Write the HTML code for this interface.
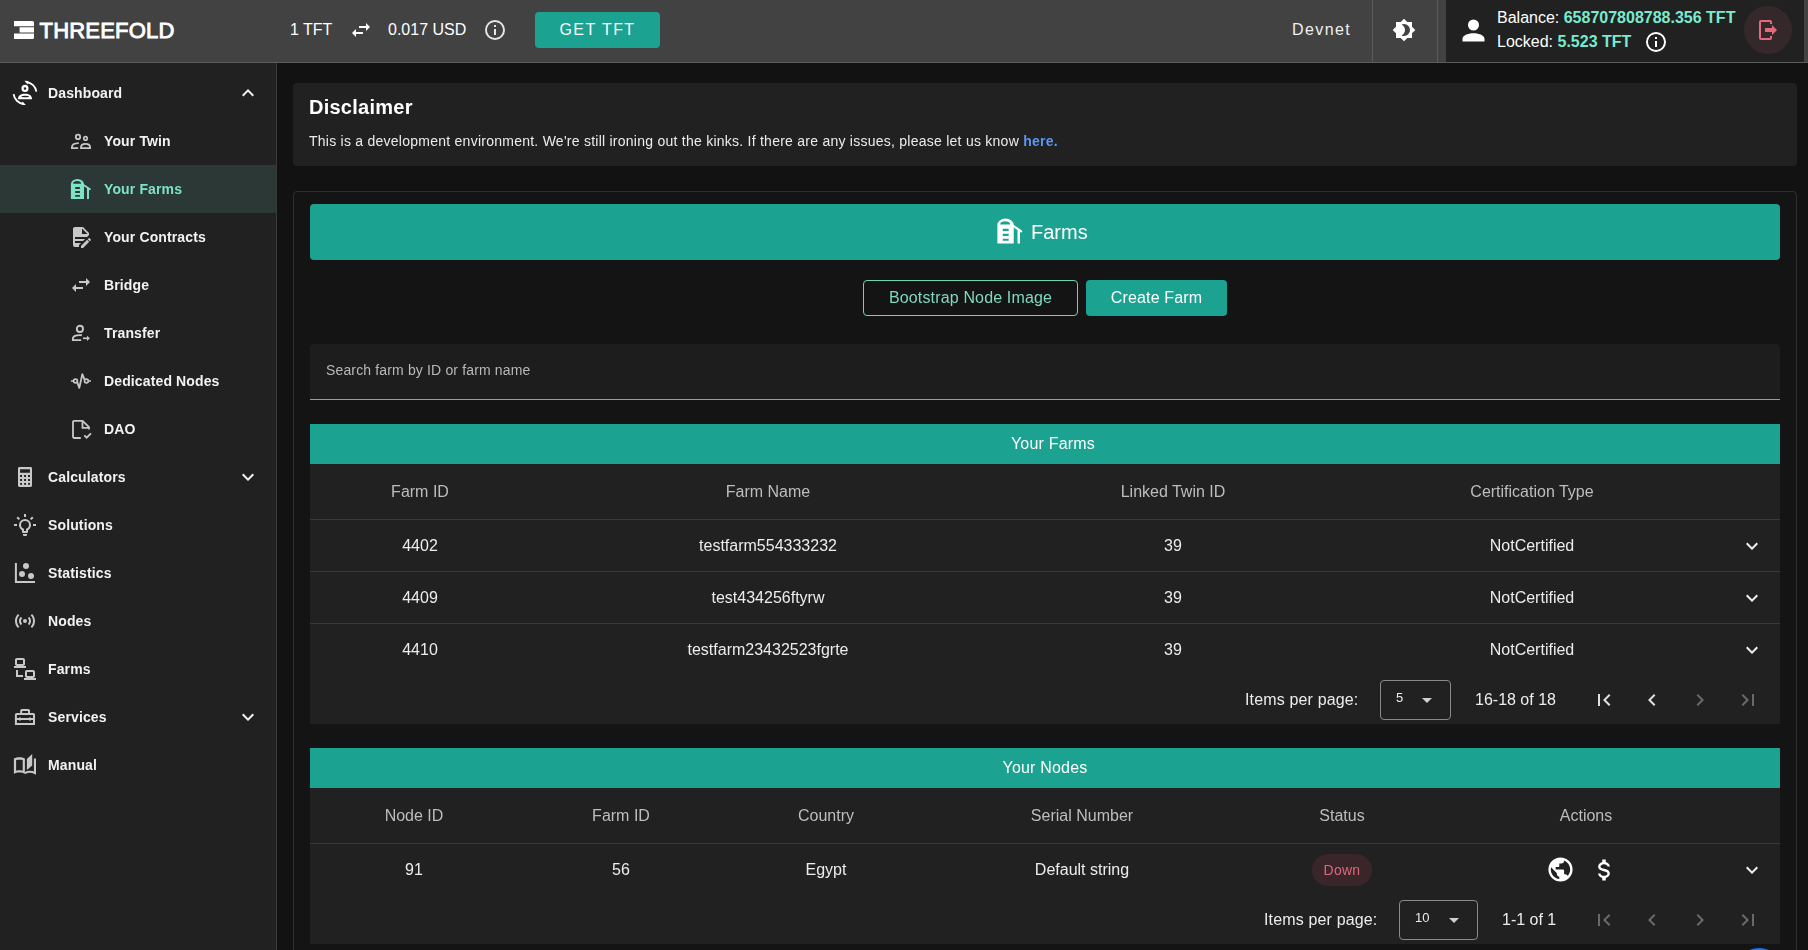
<!DOCTYPE html>
<html><head><meta charset="utf-8">
<style>
*{box-sizing:border-box;margin:0;padding:0}
html,body{width:1808px;height:950px;overflow:hidden;background:#121212;font-family:"Liberation Sans",sans-serif;color:#fff}
.abs{position:absolute}
svg{display:block}
#hdr{position:absolute;left:0;top:0;width:1808px;height:63px;background:#424242;border-bottom:1px solid #5c5c5c}
#side{position:absolute;left:0;top:63px;width:277px;height:887px;background:#212121;border-right:1px solid #3a3a3a}
.ni{position:absolute;left:0;width:276px;height:48px}
.ni .t{position:absolute;top:0;line-height:48px;font-size:14px;font-weight:bold;color:#ececec}
.ni svg{position:absolute}
.ctr{position:absolute;transform:translateX(-50%);white-space:nowrap}
.teal{background:#1ba291}
.th{font-size:16px;color:#bdbdbd}
.td{font-size:16px;color:#ececec}
.hr{position:absolute;height:1px;background:#3d3d3d}
#side,#main{will-change:transform}#main{position:absolute;left:0;top:0;width:1808px;height:950px}</style></head><body>

<!-- HEADER -->
<div id="hdr">
  <!-- logo -->
  <svg class="abs" style="left:14px;top:21px" width="20" height="18" viewBox="0 0 20 18">
    <path fill="#fff" d="M0,0H18.5A1.5,1.5 0 0 1 20,1.5V5.2H0Z M5.6,6.2H20V11.6H5.6Z M0,12.6H20V16.5A1.5,1.5 0 0 1 18.5,18H0Z"/>
  </svg>
  <div class="abs" style="left:39.5px;top:16.5px;font-size:22px;font-weight:normal;-webkit-text-stroke:0.9px #fff;letter-spacing:0.2px;color:#fff;line-height:27px">THREEFOLD</div>
  <div class="abs" style="left:290px;top:20px;font-size:16px;line-height:19px;color:#fff">1 TFT</div>
  <svg class="abs" style="left:349px;top:18px" width="24" height="24" viewBox="0 0 24 24"><path fill="#fff" d="M21,9L17,5V8H10V10H17V13M7,11L3,15L7,19V16H14V14H7V11Z"/></svg>
  <div class="abs" style="left:388px;top:20px;font-size:16px;line-height:19px;color:#fff">0.017 USD</div>
  <svg class="abs" style="left:483px;top:18px" width="24" height="24" viewBox="0 0 24 24"><path fill="#e6e6e6" d="M11,9H13V7H11M12,20C7.59,20 4,16.41 4,12C4,7.59 7.59,4 12,4C16.41,4 20,7.59 20,12C20,16.41 16.41,20 12,20M12,2A10,10 0 0,0 2,12A10,10 0 0,0 12,22A10,10 0 0,0 22,12A10,10 0 0,0 12,2M11,17H13V11H11V17Z"/></svg>
  <div class="abs teal" style="left:535px;top:12px;width:125px;height:36px;border-radius:4px;background:#1ba291;font-size:16px;letter-spacing:1.43px;line-height:36px;text-align:center;color:#fff">GET TFT</div>

  <div class="abs" style="left:1292px;top:20px;font-size:16px;letter-spacing:1.4px;line-height:19px;color:#f0f0f0">Devnet</div>
  <div class="abs" style="left:1372px;top:0;width:1px;height:62px;background:#5a5a5a"></div>
  <svg class="abs" style="left:1392px;top:18px" width="24" height="24" viewBox="0 0 24 24"><path fill="#fff" d="M12,18C11.11,18 10.26,17.8 9.5,17.45C11.56,16.5 13,14.42 13,12C13,9.58 11.56,7.5 9.5,6.55C10.26,6.2 11.11,6 12,6A6,6 0 0,1 18,12A6,6 0 0,1 12,18M20,8.69V4H15.31L12,0.69L8.69,4H4V8.69L0.69,12L4,15.31V20H8.69L12,23.31L15.31,20H20V15.31L23.31,12L20,8.69Z"/></svg>
  <div class="abs" style="left:1437px;top:0;width:1px;height:62px;background:#5a5a5a"></div>
  <div class="abs" style="left:1446px;top:0;width:358px;height:62px;background:#212121"></div>
  <svg class="abs" style="left:1456.5px;top:13.5px" width="33" height="33" viewBox="0 0 24 24"><path fill="#fff" d="M12,4A4,4 0 0,1 16,8A4,4 0 0,1 12,12A4,4 0 0,1 8,8A4,4 0 0,1 12,4M12,14C16.42,14 20,15.79 20,18V20H4V18C4,15.79 7.58,14 12,14Z"/></svg>
  <div class="abs" style="left:1497px;top:8px;font-size:16px;line-height:19px;color:#fff;white-space:nowrap">Balance: <b style="color:#78ebce">658707808788.356 TFT</b></div>
  <div class="abs" style="left:1497px;top:32px;font-size:16px;line-height:19px;color:#fff;white-space:nowrap">Locked: <b style="color:#78ebce">5.523 TFT</b></div>
  <svg class="abs" style="left:1644px;top:30px" width="24" height="24" viewBox="0 0 24 24"><path fill="#fff" d="M11,9H13V7H11M12,20C7.59,20 4,16.41 4,12C4,7.59 7.59,4 12,4C16.41,4 20,7.59 20,12C20,16.41 16.41,20 12,20M12,2A10,10 0 0,0 2,12A10,10 0 0,0 12,22A10,10 0 0,0 22,12A10,10 0 0,0 12,2M11,17H13V11H11V17Z"/></svg>
  <div class="abs" style="left:1744px;top:6px;width:48px;height:48px;border-radius:50%;background:#35282a"></div>
  <svg class="abs" style="left:1756px;top:18px" width="24" height="24" viewBox="0 0 24 24"><path fill="#e2697e" d="M16,17V14H9V10H16V7L21,12L16,17M14,2A2,2 0 0,1 16,4V6H14V4H5V20H14V18H16V20A2,2 0 0,1 14,22H5A2,2 0 0,1 3,20V4A2,2 0 0,1 5,2H14Z"/></svg>
</div>

<!-- SIDEBAR -->
<div id="side">
  <!-- Dashboard -->
  <svg class="abs" style="left:12px;top:17px" width="26" height="26" viewBox="0 0 26 26" fill="none" stroke="#fff">
    <circle cx="13" cy="8.4" r="2.4" stroke-width="2.3"/>
    <path d="M5.9,19.2 C5.9,15.6 9,13.8 13,13.8 C17,13.8 20.1,15.6 20.1,19.2 Z M9.3,16.45 A3.9,0.8 0 0 1 17.1,16.45 A3.9,0.8 0 0 1 9.3,16.45Z" fill="#fff" stroke="none" fill-rule="evenodd"/>
    <path d="M14.5,2.1 A11.2,11.2 0 0 1 24.4,11.6" stroke-width="1.8"/>
    <path d="M12.4,0.8 L16.6,0.9 L15.6,4.6 Z" fill="#fff" stroke="none"/>
    <path d="M1.6,14.2 A11.2,11.2 0 0 0 11.5,23.9" stroke-width="1.8"/>
    <path d="M13.8,25 L9.6,25.1 L10.6,21.4 Z" fill="#fff" stroke="none"/>
  </svg>
  <div class="abs" style="left:48px;top:6px;height:48px;line-height:48px;font-size:14px;font-weight:bold;letter-spacing:0.13px;color:#f2f2f2">Dashboard</div>
  <svg class="abs" style="left:236px;top:18px" width="24" height="24" viewBox="0 0 24 24"><path fill="#f2f2f2" d="M7.41,15.41L12,10.83L16.59,15.41L18,14L12,8L6,14L7.41,15.41Z"/></svg>

  <!-- Your Twin -->
  <svg class="abs" style="left:69px;top:66px" width="24" height="24" viewBox="0 0 24 24" fill="none" stroke="#c8c8c8" stroke-width="1.8">
    <circle cx="9" cy="7.9" r="2.2"/>
    <circle cx="16.5" cy="9.4" r="1.75" stroke-width="1.6"/>
    <path d="M9.8,14.1 C5.2,14.2 2.9,16 2.9,18.2 V19.1 H9.2"/>
    <path d="M12,19.1 V18.3 C12,16 14,14.9 16.5,14.9 C19,14.9 21.1,16 21.1,18.3 V19.1 Z"/>
  </svg>
  <div class="abs" style="left:104px;top:54px;height:48px;line-height:48px;font-size:14px;font-weight:bold;letter-spacing:0.13px;color:#f2f2f2">Your Twin</div>

  <!-- Your Farms (active) -->
  <div class="abs" style="left:0;top:102px;width:276px;height:48px;background:#2c3836"></div>
  <svg class="abs" style="left:69px;top:114px" width="24" height="24" viewBox="0 0 24 24">
    <path fill="#7de3c6" fill-rule="evenodd" d="M1.9,22 V7.2 A6.55,5.2 0 0 1 15,7.2 V22 Z M4.1,6.7 A4,2.6 0 0 1 12.1,6.7 Z M6.2,10.1 H10.9 V11.9 H6.2 Z M6.2,14.1 H10.9 V15.9 H6.2 Z M6.2,18.1 H10.9 V19.8 H6.2 Z"/>
    <path d="M15,8.2 L21,12.3" stroke="#7de3c6" stroke-width="1.7" stroke-linecap="round" fill="none"/>
    <path d="M19,10.9 V22" stroke="#7de3c6" stroke-width="2" fill="none"/>
  </svg>
  <div class="abs" style="left:104px;top:102px;height:48px;line-height:48px;font-size:14px;font-weight:bold;letter-spacing:0.13px;color:#7de3c6">Your Farms</div>

  <!-- Your Contracts -->
  <svg class="abs" style="left:69px;top:162px" width="24" height="24" viewBox="0 0 24 24"><path fill="#c8c8c8" d="M6,2C4.89,2 4,2.89 4,4V20A2,2 0 0,0 6,22H10V20.09L12.09,18H6V16H14.09L16.09,14H6V12H18.09L20,10.09V8L14,2H6M13,3.5L18.5,9H13V3.5M20.15,13C20,13 19.86,13.05 19.75,13.16L18.73,14.18L20.82,16.26L21.84,15.25C22.05,15.03 22.05,14.67 21.84,14.46L20.54,13.16C20.43,13.05 20.29,13 20.15,13M18.14,14.77L12,20.92V23H14.08L20.23,16.85L18.14,14.77Z"/></svg>
  <div class="abs" style="left:104px;top:150px;height:48px;line-height:48px;font-size:14px;font-weight:bold;letter-spacing:0.13px;color:#f2f2f2">Your Contracts</div>

  <!-- Bridge -->
  <svg class="abs" style="left:69px;top:210px" width="24" height="24" viewBox="0 0 24 24"><path fill="#c8c8c8" d="M21,9L17,5V8H10V10H17V13M7,11L3,15L7,19V16H14V14H7V11Z"/></svg>
  <div class="abs" style="left:104px;top:198px;height:48px;line-height:48px;font-size:14px;font-weight:bold;letter-spacing:0.13px;color:#f2f2f2">Bridge</div>

  <!-- Transfer -->
  <svg class="abs" style="left:69px;top:258px" width="24" height="24" viewBox="0 0 24 24" fill="none" stroke="#c8c8c8" stroke-width="1.9">
    <circle cx="10.9" cy="7.9" r="3.1"/>
    <path d="M12.9,14.2 C12.3,14.1 11.6,14.1 11,14.1 C6.5,14.1 3.9,15.8 3.9,17.6 V19.1 H12.2"/>
    <path d="M14,17.3 H18.5" stroke-width="1.7"/>
    <path d="M18,14.7 L20.9,17.3 L18,19.9 Z" fill="#c8c8c8" stroke="none"/>
  </svg>
  <div class="abs" style="left:104px;top:246px;height:48px;line-height:48px;font-size:14px;font-weight:bold;letter-spacing:0.13px;color:#f2f2f2">Transfer</div>

  <!-- Dedicated Nodes -->
  <svg class="abs" style="left:69px;top:306px" width="24" height="24" viewBox="0 0 24 24" fill="none" stroke="#c8c8c8" stroke-width="1.7">
    <path d="M1.9,12 H4.3 M19.6,12 H22"/>
    <circle cx="6.5" cy="12" r="1.9"/>
    <circle cx="17.4" cy="12" r="1.9"/>
    <path d="M8.2,13.1 L10.3,18.9 L13.3,5.2 L15.6,10.6" stroke-width="1.8" stroke-linejoin="round"/>
  </svg>
  <div class="abs" style="left:104px;top:294px;height:48px;line-height:48px;font-size:14px;font-weight:bold;letter-spacing:0.13px;color:#f2f2f2">Dedicated Nodes</div>

  <!-- DAO -->
  <svg class="abs" style="left:69px;top:354px" width="24" height="24" viewBox="0 0 24 24" fill="none" stroke="#c8c8c8" stroke-width="1.8">
    <path d="M11.8,21 H5.2 A1.2,1.2 0 0 1 4,19.8 V5 A1.2,1.2 0 0 1 5.2,3.8 H13.6 L20,10.2 V12.6"/>
    <path d="M13.5,3.9 V10.9 H20"/>
    <path d="M15.3,18.4 L17.6,20.7 L22,16.3"/>
  </svg>
  <div class="abs" style="left:104px;top:342px;height:48px;line-height:48px;font-size:14px;font-weight:bold;letter-spacing:0.13px;color:#f2f2f2">DAO</div>

  <!-- Calculators -->
  <svg class="abs" style="left:12px;top:402px" width="24" height="24" viewBox="0 0 24 24">
    <path fill="#c8c8c8" fill-rule="evenodd" d="M7.4,2H18.6A1.4,1.4 0 0 1 20,3.4V20.6A1.4,1.4 0 0 1 18.6,22H7.4A1.4,1.4 0 0 1 6,20.6V3.4A1.4,1.4 0 0 1 7.4,2Z M8.1,4.2H17.9V7.8H8.1Z M8.1,10.1H10V11.9H8.1Z M12.1,10.1H14V11.9H12.1Z M16.1,10.1H18V11.9H16.1Z M8.1,14.1H10V15.9H8.1Z M12.1,14.1H14V15.9H12.1Z M16.1,14.1H18V15.9H16.1Z M8.1,18H10V19.8H8.1Z M12.1,18H14V19.8H12.1Z M16.1,18H18V19.8H16.1Z M8.1,9.6 H17.9 V9.6Z"/>
    <path d="M8,9 V20 M18,9 V20" stroke="none"/>
  </svg>
  <div class="abs" style="left:48px;top:390px;height:48px;line-height:48px;font-size:14px;font-weight:bold;letter-spacing:0.13px;color:#f2f2f2">Calculators</div>
  <svg class="abs" style="left:236px;top:402px" width="24" height="24" viewBox="0 0 24 24"><path fill="#f2f2f2" d="M7.41,8.58L12,13.17L16.59,8.58L18,10L12,16L6,10L7.41,8.58Z"/></svg>

  <!-- Solutions -->
  <svg class="abs" style="left:13px;top:450px" width="24" height="24" viewBox="0 0 24 24"><path fill="#c8c8c8" d="M20,11H23V13H20V11M1,11H4V13H1V11M13,1V4H11V1H13M4.92,3.5L7.05,5.64L5.63,7.05L3.5,4.93L4.92,3.5M16.95,5.63L19.07,3.5L20.5,4.93L18.36,7.05L16.95,5.63M12,6A6,6 0 0,1 18,12C18,14.22 16.79,16.16 15,17.2V19A1,1 0 0,1 14,20H10A1,1 0 0,1 9,19V17.2C7.21,16.16 6,14.22 6,12A6,6 0 0,1 12,6M14,21V22A1,1 0 0,1 13,23H11A1,1 0 0,1 10,22V21H14M11,18H13V15.87C14.73,15.43 16,13.86 16,12A4,4 0 0,0 12,8A4,4 0 0,0 8,12C8,13.86 9.27,15.43 11,15.87V18Z"/></svg>
  <div class="abs" style="left:48px;top:438px;height:48px;line-height:48px;font-size:14px;font-weight:bold;letter-spacing:0.13px;color:#f2f2f2">Solutions</div>

  <!-- Statistics -->
  <svg class="abs" style="left:12px;top:498px" width="24" height="24" viewBox="0 0 24 24">
    <path d="M3.9,2 V21 H23" fill="none" stroke="#c8c8c8" stroke-width="2"/>
    <circle cx="14" cy="5" r="3" fill="#c8c8c8"/><circle cx="10" cy="12.9" r="3" fill="#c8c8c8"/><circle cx="19" cy="15" r="3" fill="#c8c8c8"/>
  </svg>
  <div class="abs" style="left:48px;top:486px;height:48px;line-height:48px;font-size:14px;font-weight:bold;letter-spacing:0.13px;color:#f2f2f2">Statistics</div>

  <!-- Nodes -->
  <svg class="abs" style="left:13px;top:546px" width="24" height="24" viewBox="0 0 24 24"><path fill="#c8c8c8" d="M4.93,4.93C3.12,6.74 2,9.24 2,12C2,14.76 3.12,17.26 4.93,19.07L6.34,17.66C4.89,16.22 4,14.22 4,12C4,9.79 4.89,7.78 6.34,6.34L4.93,4.93M19.07,4.93L17.66,6.34C19.11,7.78 20,9.79 20,12C20,14.22 19.11,16.22 17.66,17.66L19.07,19.07C20.88,17.26 22,14.76 22,12C22,9.24 20.88,6.74 19.07,4.93M7.76,7.76C6.67,8.85 6,10.35 6,12C6,13.65 6.67,15.15 7.76,16.24L9.17,14.83C8.45,14.11 8,13.11 8,12C8,10.89 8.45,9.89 9.17,9.17L7.76,7.76M16.24,7.76L14.83,9.17C15.55,9.89 16,10.89 16,12C16,13.11 15.55,14.11 14.83,14.83L16.24,16.24C17.33,15.15 18,13.65 18,12C18,10.35 17.33,8.85 16.24,7.76M12,10A2,2 0 0,0 10,12A2,2 0 0,0 12,14A2,2 0 0,0 14,12A2,2 0 0,0 12,10Z"/></svg>
  <div class="abs" style="left:48px;top:534px;height:48px;line-height:48px;font-size:14px;font-weight:bold;letter-spacing:0.13px;color:#f2f2f2">Nodes</div>

  <!-- Farms -->
  <svg class="abs" style="left:13px;top:594px" width="24" height="24" viewBox="0 0 24 24"><path fill="#c8c8c8" d="M4,1C2.89,1 2,1.89 2,3V7C2,8.11 2.89,9 4,9H1V11H13V9H10C11.11,9 12,8.11 12,7V3C12,1.89 11.11,1 10,1H4M4,3H10V7H4V3M3,13V18L3,20H10V18H5V13H3M14,13C12.89,13 12,13.89 12,15V19C12,20.11 12.89,21 14,21H11V23H23V21H20C21.11,21 22,20.11 22,19V15C22,13.89 21.11,13 20,13H14M14,15H20V19H14V15Z"/></svg>
  <div class="abs" style="left:48px;top:582px;height:48px;line-height:48px;font-size:14px;font-weight:bold;letter-spacing:0.13px;color:#f2f2f2">Farms</div>

  <!-- Services -->
  <svg class="abs" style="left:12px;top:642px" width="24" height="24" viewBox="0 0 24 24" fill="none" stroke="#c8c8c8" stroke-width="2">
    <path d="M3.9,19 V9.8 A0.8,0.8 0 0 1 4.7,9 H21.2 A0.8,0.8 0 0 1 22,9.8 V19 Z"/>
    <path d="M9.2,9 V5.8 A0.8,0.8 0 0 1 10,5 H16.2 A0.8,0.8 0 0 1 17,5.8 V9"/>
    <path d="M4,14 H22"/>
    <path d="M8,12.6 V15.6 M18,12.6 V15.6" stroke-width="1.9"/>
  </svg>
  <div class="abs" style="left:48px;top:630px;height:48px;line-height:48px;font-size:14px;font-weight:bold;letter-spacing:0.13px;color:#f2f2f2">Services</div>
  <svg class="abs" style="left:236px;top:642px" width="24" height="24" viewBox="0 0 24 24"><path fill="#f2f2f2" d="M7.41,8.58L12,13.17L16.59,8.58L18,10L12,16L6,10L7.41,8.58Z"/></svg>

  <!-- Manual -->
  <svg class="abs" style="left:12px;top:690px" width="24" height="24" viewBox="0 0 24 24">
    <path fill="#c8c8c8" fill-rule="evenodd" d="M1.9,5.6 C4.9,3.8 9.9,3.8 12.9,5.6 V20.9 C9.9,19.1 4.9,19.1 1.9,20.9 Z M4.1,7.1 C6,6.5 8.8,6.5 10.7,7.1 V17.8 C8.8,17.2 6,17.2 4.1,17.8 Z"/>
    <path fill="#c8c8c8" d="M14.9,6.1 L20.2,1.1 V12.6 L14.9,17 Z"/>
    <path d="M12.9,20.1 C16,18.5 19.8,18.5 22.95,20.1 V5.4" fill="none" stroke="#c8c8c8" stroke-width="2.1"/>
  </svg>
  <div class="abs" style="left:48px;top:678px;height:48px;line-height:48px;font-size:14px;font-weight:bold;letter-spacing:0.13px;color:#f2f2f2">Manual</div>
</div>

<!-- MAIN -->
<div id="main">
<div class="abs" style="left:293px;top:83px;width:1504px;height:83px;background:#212121;border-radius:4px"></div>
<div class="abs" style="left:309px;top:96px;font-size:20px;font-weight:bold;line-height:23px;letter-spacing:0.25px;color:#fff">Disclaimer</div>
<div class="abs" style="left:309px;top:133px;font-size:14px;line-height:17px;letter-spacing:0.25px;color:#ececec;white-space:nowrap">This is a development environment. We're still ironing out the kinks. If there are any issues, please let us know <b style="color:#5c95f5">here.</b></div>
<div class="abs" style="left:293px;top:191px;width:1504px;height:800px;background:#141414;border:1px solid #2f2f2f;border-radius:4px"></div>
<div class="abs" style="left:310px;top:204px;width:1470px;height:56px;background:#1ba291;border-radius:4px"></div>
<svg class="abs" style="left:995px;top:216px" width="30" height="30" viewBox="0 0 24 24">
    <path fill="#fff" fill-rule="evenodd" d="M1.9,22 V7.2 A6.55,5.2 0 0 1 15,7.2 V22 Z M4.1,6.7 A4,2.6 0 0 1 12.1,6.7 Z M6.2,10.1 H10.9 V11.9 H6.2 Z M6.2,14.1 H10.9 V15.9 H6.2 Z M6.2,18.1 H10.9 V19.8 H6.2 Z"/>
    <path d="M15,8.2 L21,12.3" stroke="#fff" stroke-width="1.7" stroke-linecap="round" fill="none"/>
    <path d="M19,10.9 V22" stroke="#fff" stroke-width="2" fill="none"/>
  </svg>
<div class="abs" style="left:1031px;top:221px;font-size:20px;line-height:23px;color:#fff">Farms</div>
<div class="abs" style="left:863px;top:280px;width:215px;height:36px;border:1px solid #6fd3b7;border-radius:4px;color:#7ed9bf;font-size:16px;line-height:34px;letter-spacing:0.15px;text-align:center">Bootstrap Node Image</div>
<div class="abs" style="left:1086px;top:280px;width:141px;height:36px;background:#1ba291;border-radius:4px;color:#fff;font-size:16px;line-height:36px;letter-spacing:0.15px;text-align:center">Create Farm</div>
<div class="abs" style="left:310px;top:344px;width:1470px;height:56px;background:#1d1d1d;border-radius:4px 4px 0 0;border-bottom:1px solid #9a9a9a"></div>
<div class="abs" style="left:326px;top:362px;font-size:14px;line-height:17px;letter-spacing:0.15px;color:#b8b8b8">Search farm by ID or farm name</div>
<div class="abs" style="left:310px;top:424px;width:1470px;height:40px;background:#1ba291"></div>
<div class="ctr" style="left:1053px;top:435px;font-size:16px;line-height:18px;letter-spacing:0.2px;color:#fff">Your Farms</div>
<div class="abs" style="left:310px;top:464px;width:1470px;height:260px;background:#212121"></div>
<div class="ctr th" style="left:420px;top:483px;line-height:18px">Farm ID</div>
<div class="ctr th" style="left:768px;top:483px;line-height:18px">Farm Name</div>
<div class="ctr th" style="left:1173px;top:483px;line-height:18px">Linked Twin ID</div>
<div class="ctr th" style="left:1532px;top:483px;line-height:18px">Certification Type</div>
<div class="hr" style="left:310px;top:519px;width:1470px;background:#3a3a3a"></div>
<div class="ctr td" style="left:420px;top:536.5px;line-height:18px">4402</div>
<div class="ctr td" style="left:768px;top:536.5px;line-height:18px">testfarm554333232</div>
<div class="ctr td" style="left:1173px;top:536.5px;line-height:18px">39</div>
<div class="ctr td" style="left:1532px;top:536.5px;line-height:18px">NotCertified</div>
<svg class="abs" style="left:1740px;top:534px" width="24" height="24" viewBox="0 0 24 24"><path fill="#f0f0f0" d="M7.41,8.58L12,13.17L16.59,8.58L18,10L12,16L6,10L7.41,8.58Z"/></svg>
<div class="hr" style="left:310px;top:571px;width:1470px;background:#3a3a3a"></div>
<div class="ctr td" style="left:420px;top:588.5px;line-height:18px">4409</div>
<div class="ctr td" style="left:768px;top:588.5px;line-height:18px">test434256ftyrw</div>
<div class="ctr td" style="left:1173px;top:588.5px;line-height:18px">39</div>
<div class="ctr td" style="left:1532px;top:588.5px;line-height:18px">NotCertified</div>
<svg class="abs" style="left:1740px;top:586px" width="24" height="24" viewBox="0 0 24 24"><path fill="#f0f0f0" d="M7.41,8.58L12,13.17L16.59,8.58L18,10L12,16L6,10L7.41,8.58Z"/></svg>
<div class="hr" style="left:310px;top:623px;width:1470px;background:#3a3a3a"></div>
<div class="ctr td" style="left:420px;top:640.5px;line-height:18px">4410</div>
<div class="ctr td" style="left:768px;top:640.5px;line-height:18px">testfarm23432523fgrte</div>
<div class="ctr td" style="left:1173px;top:640.5px;line-height:18px">39</div>
<div class="ctr td" style="left:1532px;top:640.5px;line-height:18px">NotCertified</div>
<svg class="abs" style="left:1740px;top:638px" width="24" height="24" viewBox="0 0 24 24"><path fill="#f0f0f0" d="M7.41,8.58L12,13.17L16.59,8.58L18,10L12,16L6,10L7.41,8.58Z"/></svg>
<div class="abs" style="left:1245px;top:691px;font-size:16px;line-height:18px;letter-spacing:0.15px;color:#ececec">Items per page:</div>
<div class="abs" style="left:1380px;top:680px;width:71px;height:40px;border:1px solid #8a8a8a;border-radius:4px"></div>
<div class="abs" style="left:1396px;top:690px;font-size:13px;line-height:15px;color:#ececec">5</div>
<svg class="abs" style="left:1415px;top:688px" width="24" height="24" viewBox="0 0 24 24"><path fill="#d0d0d0" d="M7,10L12,15L17,10H7Z"/></svg>
<div class="abs" style="left:1475px;top:691px;font-size:16px;line-height:18px;color:#ececec">16-18 of 18</div>
<svg class="abs" style="left:1592px;top:688px" width="24" height="24" viewBox="0 0 24 24"><path fill="#e0e0e0" d="M18.41,16.59L13.82,12L18.41,7.41L17,6L11,12L17,18L18.41,16.59M6,6H8V18H6V6Z"/></svg>
<svg class="abs" style="left:1640px;top:688px" width="24" height="24" viewBox="0 0 24 24"><path fill="#e0e0e0" d="M15.41,16.58L10.83,12L15.41,7.41L14,6L8,12L14,18L15.41,16.58Z"/></svg>
<svg class="abs" style="left:1688px;top:688px" width="24" height="24" viewBox="0 0 24 24"><path fill="#6a6a6a" d="M8.59,16.58L13.17,12L8.59,7.41L10,6L16,12L10,18L8.59,16.58Z"/></svg>
<svg class="abs" style="left:1736px;top:688px" width="24" height="24" viewBox="0 0 24 24"><path fill="#6a6a6a" d="M5.59,7.41L10.18,12L5.59,16.59L7,18L13,12L7,6L5.59,7.41M16,6H18V18H16V6Z"/></svg>
<div class="abs" style="left:310px;top:748px;width:1470px;height:40px;background:#1ba291"></div>
<div class="ctr" style="left:1045px;top:759px;font-size:16px;line-height:18px;letter-spacing:0.2px;color:#fff">Your Nodes</div>
<div class="abs" style="left:310px;top:788px;width:1470px;height:156px;background:#212121"></div>
<div class="ctr th" style="left:414px;top:807px;line-height:18px">Node ID</div>
<div class="ctr th" style="left:621px;top:807px;line-height:18px">Farm ID</div>
<div class="ctr th" style="left:826px;top:807px;line-height:18px">Country</div>
<div class="ctr th" style="left:1082px;top:807px;line-height:18px">Serial Number</div>
<div class="ctr th" style="left:1342px;top:807px;line-height:18px">Status</div>
<div class="ctr th" style="left:1586px;top:807px;line-height:18px">Actions</div>
<div class="hr" style="left:310px;top:843px;width:1470px;background:#3a3a3a"></div>
<div class="ctr td" style="left:414px;top:860.5px;line-height:18px">91</div>
<div class="ctr td" style="left:621px;top:860.5px;line-height:18px">56</div>
<div class="ctr td" style="left:826px;top:860.5px;line-height:18px">Egypt</div>
<div class="ctr td" style="left:1082px;top:860.5px;line-height:18px">Default string</div>
<svg class="abs" style="left:1740px;top:858px" width="24" height="24" viewBox="0 0 24 24"><path fill="#f0f0f0" d="M7.41,8.58L12,13.17L16.59,8.58L18,10L12,16L6,10L7.41,8.58Z"/></svg>
<div class="abs" style="left:1312px;top:854px;width:60px;height:32px;border-radius:16px;background:#3a2529"></div><div class="ctr" style="left:1342px;top:862px;font-size:14px;line-height:17px;letter-spacing:0.25px;color:#d9687f">Down</div><svg class="abs" style="left:1546px;top:855px" width="29" height="29" viewBox="0 0 24 24"><path fill="#fff" d="M17.9,17.39C17.64,16.59 16.89,16 16,16H15V13A1,1 0 0,0 14,12H8V10H10A1,1 0 0,0 11,9V7H13A2,2 0 0,0 15,5V4.59C17.93,5.77 20,8.64 20,12C20,14.08 19.2,15.97 17.9,17.39M11,19.93C7.05,19.44 4,16.08 4,12C4,11.38 4.08,10.78 4.21,10.21L9,15V16A2,2 0 0,0 11,18M12,2A10,10 0 0,0 2,12A10,10 0 0,0 12,22A10,10 0 0,0 22,12A10,10 0 0,0 12,2Z"/></svg><svg class="abs" style="left:1590px;top:856px" width="28" height="28" viewBox="0 0 24 24"><path fill="#fff" d="M7,15H9C9,16.08 10.37,17 12,17C13.63,17 15,16.08 15,15C15,13.9 13.960,13.5 11.76,12.97C9.64,12.44 7,11.78 7,9C7,7.21 8.47,5.69 10.5,5.18V3H13.5V5.18C15.53,5.69 17,7.21 17,9H15C15,7.92 13.63,7 12,7C10.37,7 9,7.92 9,9C9,10.1 10.04,10.5 12.24,11.030C14.36,11.56 17,12.22 17,15C17,16.79 15.53,18.31 13.5,18.82V21H10.5V18.82C8.47,18.31 7,16.79 7,15Z"/></svg>
<div class="abs" style="left:1264px;top:911px;font-size:16px;line-height:18px;letter-spacing:0.15px;color:#ececec">Items per page:</div>
<div class="abs" style="left:1399px;top:900px;width:79px;height:40px;border:1px solid #8a8a8a;border-radius:4px"></div>
<div class="abs" style="left:1415px;top:910px;font-size:13px;line-height:15px;color:#ececec">10</div>
<svg class="abs" style="left:1442px;top:908px" width="24" height="24" viewBox="0 0 24 24"><path fill="#d0d0d0" d="M7,10L12,15L17,10H7Z"/></svg>
<div class="abs" style="left:1502px;top:911px;font-size:16px;line-height:18px;color:#ececec">1-1 of 1</div>
<svg class="abs" style="left:1592px;top:908px" width="24" height="24" viewBox="0 0 24 24"><path fill="#6a6a6a" d="M18.41,16.59L13.82,12L18.41,7.41L17,6L11,12L17,18L18.41,16.59M6,6H8V18H6V6Z"/></svg>
<svg class="abs" style="left:1640px;top:908px" width="24" height="24" viewBox="0 0 24 24"><path fill="#6a6a6a" d="M15.41,16.58L10.83,12L15.41,7.41L14,6L8,12L14,18L15.41,16.58Z"/></svg>
<svg class="abs" style="left:1688px;top:908px" width="24" height="24" viewBox="0 0 24 24"><path fill="#6a6a6a" d="M8.59,16.58L13.17,12L8.59,7.41L10,6L16,12L10,18L8.59,16.58Z"/></svg>
<svg class="abs" style="left:1736px;top:908px" width="24" height="24" viewBox="0 0 24 24"><path fill="#6a6a6a" d="M5.59,7.41L10.18,12L5.59,16.59L7,18L13,12L7,6L5.59,7.41M16,6H18V18H16V6Z"/></svg>
<div class="abs" style="left:1735px;top:948px;width:48px;height:48px;border-radius:50%;background:#1976f0"></div>
</div>

</body></html>
